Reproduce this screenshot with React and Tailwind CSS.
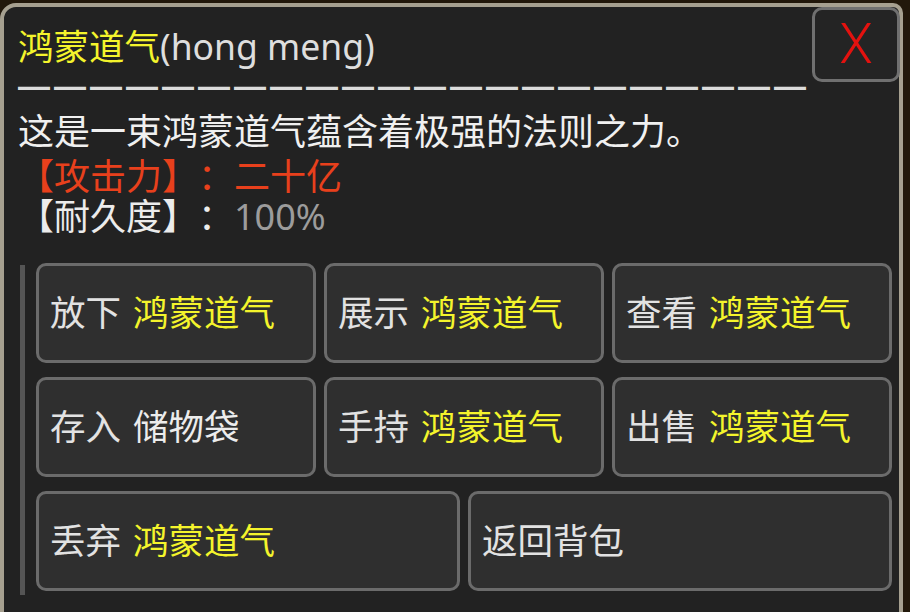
import React from 'react'

const FONT = "font-['Noto_Sans','Noto_Sans_CJK_SC',sans-serif] [text-spacing-trim:space-all]"

function ActionButton({ verb, target, highlight = true }) {
  return (
    <button className="h-[100px] flex items-center px-[11px] rounded-[10px] border-[3px] border-[#6b6b6b] bg-[#2f2f2f] text-left text-[35.5px] leading-none text-[#e2e2e2]">
      <span>{verb}</span>
      {target && (
        <span className={`ml-[12px] ${highlight ? 'text-[#f4f42c]' : 'text-[#ececec]'}`}>{target}</span>
      )}
    </button>
  )
}

export default function App() {
  const dashes = '—'.repeat(22)

  return (
    <div className={`w-[910px] h-[612px] overflow-hidden bg-[#22180b] pt-[3px] pr-[7px] ${FONT}`}>
      <div className="relative h-[640px] rounded-tl-[16px] rounded-tr-[10px] border-[4px] border-[#a6a090] bg-[#222222] pl-[14px] pt-[19px]">
        {/* close */}
        <button className="absolute left-[808px] top-0 w-[88px] h-[75px] flex items-center justify-center rounded-[10px] border-[3px] border-[#707070] bg-[#242424]">
          <span className="text-[55px] leading-none text-[#e3120f] font-['Roboto',sans-serif] font-light">X</span>
        </button>

        <div className="h-[42px] flex items-center text-[35.5px] leading-none">
          <span className="text-[#f4f42c]">鸿蒙道气</span>
          <span className="text-[#dedede]">(hong meng)</span>
        </div>
        <div className="h-[36px] flex items-center whitespace-nowrap font-['Liberation_Sans',sans-serif] font-bold text-[32px] leading-none tracking-[4px] text-[#dcdcdc]">
          {dashes}
        </div>

        <div className="mt-[8px] text-[36px] leading-[40px] text-[#f0f0f0]">
          这是一束鸿蒙道气蕴含着极强的法则之力。
        </div>
        <div className="mt-[5px] text-[36px] leading-[40px] text-[#e8401c]">【攻击力】：二十亿</div>
        <div className="text-[36px] leading-[40px] text-[#ececec]">
          【耐久度】：<span className="text-[#9c9c9c]">100%</span>
        </div>

        <div className="mt-[26px] flex gap-[11px] pl-[2px]">
          <div className="w-[5px] mt-[2px] h-[330px] bg-[#555555]" />
          <div className="flex flex-col gap-[14px] w-[856px]">
            <div className="grid grid-cols-3 gap-[8px]">
              <ActionButton verb="放下" target="鸿蒙道气" />
              <ActionButton verb="展示" target="鸿蒙道气" />
              <ActionButton verb="查看" target="鸿蒙道气" />
            </div>
            <div className="grid grid-cols-3 gap-[8px]">
              <ActionButton verb="存入" target="储物袋" highlight={false} />
              <ActionButton verb="手持" target="鸿蒙道气" />
              <ActionButton verb="出售" target="鸿蒙道气" />
            </div>
            <div className="grid grid-cols-2 gap-[8px]">
              <ActionButton verb="丢弃" target="鸿蒙道气" />
              <ActionButton verb="返回背包" />
            </div>
          </div>
        </div>
      </div>
    </div>
  )
}
